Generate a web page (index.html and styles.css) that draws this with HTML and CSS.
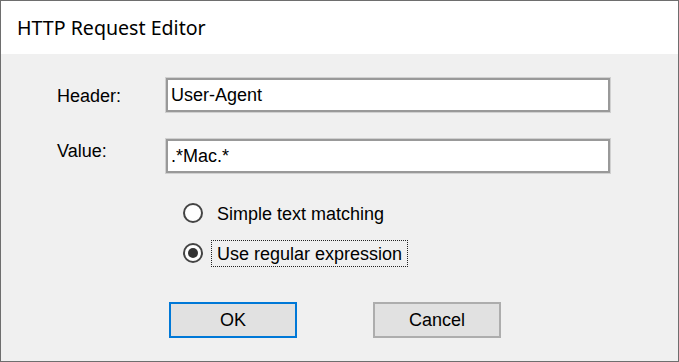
FILE: index.html
```html
<!DOCTYPE html>
<html lang="en">
<head>
    <meta charset="UTF-8">
    <title>HTTP Request Editor</title>
    <link rel="stylesheet" href="styles.css">
</head>
<body>
    <div class="dialog">
        <div class="title-bar">HTTP Request Editor</div>
        <div class="dialog-body">
            <div class="form-grid">
                <label class="field-label header-label" for="header">Header:</label>
                <input class="text-field" id="header" type="text" value="User-Agent" readonly>
                <label class="field-label value-label" for="value">Value:</label>
                <input class="text-field" id="value" type="text" value=".*Mac.*" readonly>
            </div>

            <div class="options">
                <div class="option">
                    <span class="radio"></span>
                    <span class="option-text">Simple text matching</span>
                </div>
                <div class="option">
                    <span class="radio checked"></span>
                    <span class="option-text focused">Use regular expression</span>
                </div>
            </div>

            <div class="buttons">
                <button class="btn default">OK</button>
                <button class="btn">Cancel</button>
            </div>
        </div>
    </div>
</body>
</html>
```

FILE: styles.css
```css
/* Reset */
* {
    margin: 0;
    padding: 0;
    box-sizing: border-box;
}

body {
    font-family: 'Liberation Sans', Arial, sans-serif;
    font-size: 18px;
    color: #000;
    background: #f0f0f0;
}

.dialog {
    width: 679px;
    height: 362px;
    border: 1px solid #6e6e6e;
    background: #f0f0f0;
    display: flex;
    flex-direction: column;
}

.title-bar {
    height: 53px;
    flex-shrink: 0;
    display: flex;
    align-items: center;
    padding-left: 16px;
    background: #fff;
    font-family: 'Noto Sans', sans-serif;
    font-size: 19.6px;
    color: #000;
}

.dialog-body {
    padding: 24px 0 0 56px;
}

.form-grid {
    display: grid;
    grid-template-columns: 109px 444px;
    grid-auto-rows: 34px;
    row-gap: 27px;
}

.field-label {
    line-height: 20px;
}

.header-label {
    padding-top: 8px;
}

.value-label {
    padding-top: 2px;
}

.text-field {
    width: 444px;
    height: 34px;
    border: 2px solid #999;
    box-shadow: 0 0 0 1px #d0d0d0;
    background: #fff;
    padding: 0 3px;
    font-family: 'Liberation Sans', Arial, sans-serif;
    font-size: 18px;
    color: #000;
    outline: none;
}

.options {
    margin: 26px 0 0 126px;
    display: flex;
    flex-direction: column;
    gap: 12px;
}

.option {
    height: 28px;
    display: flex;
    align-items: center;
    gap: 8px;
}

.radio {
    width: 20px;
    height: 20px;
    border: 2px solid #444;
    border-radius: 50%;
    background: #fff;
    display: flex;
    align-items: center;
    justify-content: center;
}

.radio.checked::after {
    content: "";
    width: 10px;
    height: 10px;
    border-radius: 50%;
    background: #333;
}

.option-text {
    line-height: 20px;
    padding: 3px 5px 2px;
    border: 1px solid transparent;
}

.option-text.focused {
    border: 1px dotted #222;
}

.buttons {
    margin: 35px 0 0 112px;
    display: flex;
    gap: 76px;
}

.btn {
    width: 128px;
    height: 36px;
    border: 2px solid #adadad;
    background: #e1e1e1;
    font-family: 'Liberation Sans', Arial, sans-serif;
    font-size: 18px;
    color: #000;
}

.btn.default {
    border-color: #0078d7;
}
```
